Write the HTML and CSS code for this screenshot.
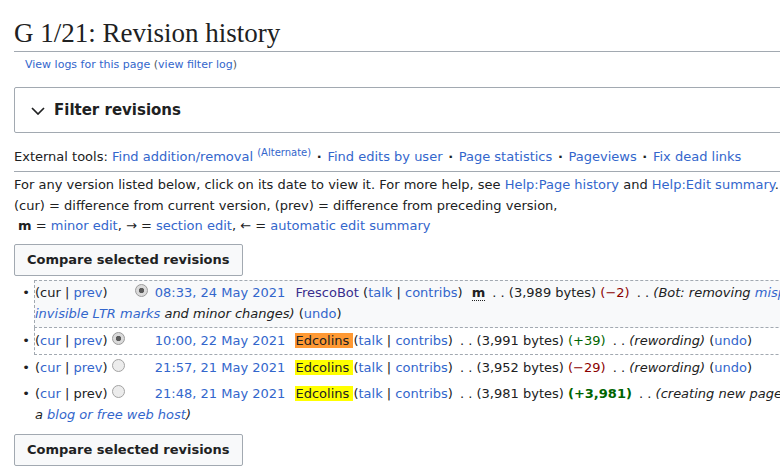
FILE: index.html
```html
<!DOCTYPE html>
<html lang="en">
<head>
<meta charset="utf-8">
<title>G 1/21: Revision history</title>
<link rel="stylesheet" href="styles.css">
</head>
<body>
<div class="page">
  <h1 class="heading">G 1/21: Revision history</h1>
  <div class="subtitle"><a href="#">View logs for this page</a> (<a href="#">view filter log</a>)</div>

  <div class="filter">
    <svg class="chevron" width="14" height="8" viewBox="0 0 14 8" aria-hidden="true"><path d="M1 1 L7 7 L13 1" fill="none" stroke="#202122" stroke-width="1.7"/></svg>
    <span class="filter-title">Filter revisions</span>
  </div>

  <div class="ext-tools">External tools: <a href="#">Find addition/removal</a> <sup class="alt"><a href="#">(Alternate)</a></sup> <b class="dot">·</b> <a href="#">Find edits by user</a> <b class="dot">·</b> <a href="#">Page statistics</a> <b class="dot">·</b> <a href="#">Pageviews</a> <b class="dot">·</b> <a href="#">Fix dead links</a></div>

  <div class="legend">
    For any version listed below, click on its date to view it. For more help, see <a href="#">Help:Page history</a> and <a href="#">Help:Edit summary</a>.<br>
    (cur) = difference from current version, (prev) = difference from preceding version,<br>
    <b class="m-legend">m</b> = <a href="#">minor edit</a>, → = <a href="#">section edit</a>, ← = <a href="#">automatic edit summary</a>
  </div>

  <button class="compare" type="button">Compare selected revisions</button>

  <ul class="history">
    <li class="row selected">
      <span>(cur | <a href="#">prev</a>)</span> <input class="radio r-old hidden" type="radio" name="oldid"><input class="radio r-new" type="radio" name="diff" checked> <a class="date" href="#">08:33, 24 May 2021</a> <span class="user"><a class="userlink bot" href="#">FrescoBot</a> (<a href="#">talk</a> | <a href="#">contribs</a>)</span> <abbr class="minor" title="This is a minor edit">m</abbr> <span class="sep">. .</span> (3,989 bytes) <span class="neg">(−2)</span> <span class="sep">. .</span> <i>(Bot: removing <a href="#">misplaced</a><br><a href="#">invisible LTR marks</a> and minor changes)</i> (<a href="#">undo</a>)
    </li>
    <li class="row selected">
      <span>(<a href="#">cur</a> | <a href="#">prev</a>)</span> <input class="radio r-old" type="radio" name="oldid" checked><input class="radio r-new hidden" type="radio" name="diff"> <a class="date" href="#">10:00, 22 May 2021</a> <span class="user"><span class="hl-orange">Edcolins </span>(<a href="#">talk</a> | <a href="#">contribs</a>)</span> <span class="sep">. .</span> (3,991 bytes) <span class="pos">(+39)</span> <span class="sep">. .</span> <i>(rewording)</i> (<a href="#">undo</a>)
    </li>
    <li class="row">
      <span>(<a href="#">cur</a> | <a href="#">prev</a>)</span> <input class="radio r-old" type="radio" name="oldid"><input class="radio r-new hidden" type="radio" name="diff"> <a class="date" href="#">21:57, 21 May 2021</a> <span class="user"><span class="hl-yellow">Edcolins </span>(<a href="#">talk</a> | <a href="#">contribs</a>)</span> <span class="sep">. .</span> (3,952 bytes) <span class="neg">(−29)</span> <span class="sep">. .</span> <i>(rewording)</i> (<a href="#">undo</a>)
    </li>
    <li class="row">
      <span>(<a href="#">cur</a> | prev)</span> <input class="radio r-old" type="radio" name="oldid"><input class="radio r-new hidden" type="radio" name="diff"> <a class="date" href="#">21:48, 21 May 2021</a> <span class="user"><span class="hl-yellow">Edcolins </span>(<a href="#">talk</a> | <a href="#">contribs</a>)</span> <span class="sep">. .</span> (3,981 bytes) <strong class="pos">(+3,981)</strong> <span class="sep">. .</span> <i>(creating new page on</i><br><i>a <a href="#">blog or free web host</a>)</i>
    </li>
  </ul>

  <button class="compare compare-bottom" type="button">Compare selected revisions</button>
</div>
</body>
</html>
```
FILE: styles.css
```css
html, body {
  margin: 0;
  padding: 0;
  overflow: hidden;
  background: #fff;
}

body {
  color: #202122;
  font-family: "DejaVu Sans", sans-serif;
  font-size: 13px;
  line-height: 1.6;
}

a {
  color: #3366cc;
  text-decoration: none;
}

.page {
  width: 1000px;
  margin-left: 14px;
}

.heading {
  margin: 16px 0 0;
  font-family: "Liberation Serif", "Times New Roman", serif;
  font-size: 27px;
  font-weight: normal;
  line-height: 35px;
  border-bottom: 1px solid #a2a9b1;
}

.subtitle {
  margin-top: 5px;
  padding-left: 11px;
  font-size: 11px;
  line-height: 16px;
  color: #54595d;
}

.filter {
  margin-top: 14px;
  height: 44px;
  border: 1px solid #a2a9b1;
  border-radius: 2px;
  display: flex;
  align-items: center;
  gap: 9px;
  padding-left: 16px;
}

.chevron {
  display: block;
  margin-top: 2px;
}

.filter-title {
  font-size: 15px;
  font-weight: bold;
  line-height: 20px;
}

.ext-tools {
  margin-top: 14px;
  padding-bottom: 3px;
  border-bottom: 1px solid #a2a9b1;
}

.alt {
  font-size: 10px;
  line-height: 1;
  vertical-align: 5px;
}

.dot {
  font-weight: bold;
  margin: 0 1.5px;
}

.legend {
  margin-top: 3px;
}

.m-legend {
  margin-left: 4px;
}

.compare {
  display: block;
  margin-top: 7px;
  padding: 6px 12px;
  border: 1px solid #a2a9b1;
  border-radius: 2px;
  background: #f8f9fa;
  color: #202122;
  font-family: "DejaVu Sans", sans-serif;
  font-size: 13px;
  font-weight: bold;
  line-height: 18px;
}

.compare-bottom {
  margin-top: 5px;
}

.history {
  margin: 4px 0 0;
  padding-left: 20px;
  list-style: disc;
}

.row::marker {
  content: "• ";
}

.row {
  border: 1px solid transparent;
  padding: 2px 0;
}

.row.selected {
  border: 1px dashed #a2a9b1;
  background: #f8f9fa;
}

.row.selected + .row.selected {
  border-top: none;
  padding-top: 3px;
  background: #fff;
}

.radio {
  -webkit-appearance: none;
  appearance: none;
  box-sizing: border-box;
  width: 13px;
  height: 13px;
  margin: 0;
  border: 1px solid #a3a3a3;
  border-radius: 50%;
  background: #ececec;
  vertical-align: baseline;
}

.radio:checked {
  border-color: #9a9a9a;
  background: radial-gradient(circle, #5a5a5a 0 2.4px, #dadada 3px);
}

.r-old {
  margin-right: 10px;
}

.r-new {
  margin-right: 3px;
}

.radio.hidden {
  visibility: hidden;
}

.user {
  margin-left: 6px;
}

.bot {
  color: #3a2e8e;
}

.hl-orange {
  background: #ff9933;
}

.hl-yellow {
  background: #ffff00;
}

.minor {
  font-weight: bold;
  text-decoration: none;
  border-bottom: 1px dotted #202122;
  margin-left: 5px;
}

.sep {
  margin-left: 3px;
}

.neg {
  color: #8b0000;
}

.pos {
  color: #006400;
}
```
